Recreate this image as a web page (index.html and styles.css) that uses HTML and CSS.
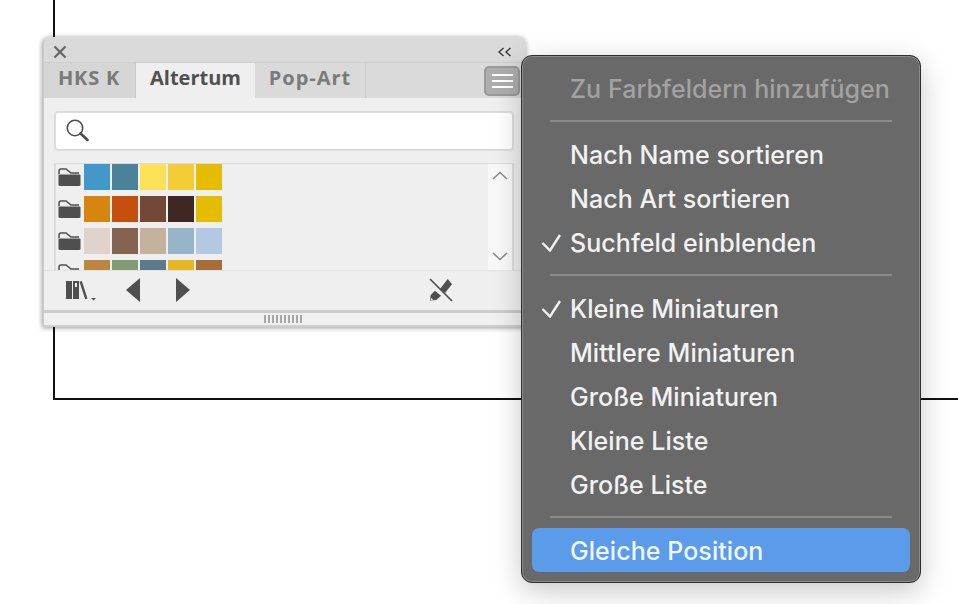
FILE: index.html
```html
<!DOCTYPE html>
<html lang="de">
<head>
<meta charset="utf-8">
<title>Farbfelder</title>
<link rel="stylesheet" href="styles.css">
</head>
<body>
<div class="canvas">
  <div class="artboard"></div>

  <section class="panel">
    <header class="titlebar">
      <svg class="close" width="14" height="14" viewBox="0 0 14 14"><path d="M1.500 1.500l11 11M12.500 1.500l-11 11" stroke="#666" stroke-width="2.200" fill="none"/></svg>
      <svg class="collapse" width="16" height="10" viewBox="0 0 16 10"><path d="M6.500 1L2 5l4.500 4M13.500 1L9 5l4.500 4" stroke="#333" stroke-width="1.300" fill="none"/></svg>
    </header>
    <nav class="tabs">
      <div class="tab tab-hks">HKS K</div>
      <div class="tab tab-active">Altertum</div>
      <div class="tab tab-pop">Pop-Art</div>
      <div class="tab-spacer"><button class="menu-btn" aria-label="Menü"><span></span><span></span><span></span></button></div>
    </nav>
    <div class="body">
      <div class="search">
        <svg width="24" height="24" viewBox="0 0 24 24"><circle cx="9" cy="9" r="7.700" stroke="#4d4d4d" stroke-width="1.600" fill="none"/><path d="M14.500 14.500l7 6.500" stroke="#4d4d4d" stroke-width="2.600" stroke-linecap="round"/></svg>
      </div>
      <div class="list">
        <div class="rows">
          <div class="row">
            <svg class="folder" width="24" height="18" viewBox="0 0 24 18"><path d="M1 6V3Q1 1 3 1h5l5 4h8" stroke="#4f4f4f" stroke-width="1.500" fill="none"/><path d="M.500 6.500h21q1 0 1 1V16.500q0 1.500-1.500 1.500H2q-1.500 0-1.500-1.500z" fill="#4f4f4f"/></svg>
            <i class="c1a"></i><i class="c1b"></i><i class="c1c"></i><i class="c1d"></i><i class="c1e"></i>
          </div>
          <div class="row">
            <svg class="folder" width="24" height="18" viewBox="0 0 24 18"><path d="M1 6V3Q1 1 3 1h5l5 4h8" stroke="#4f4f4f" stroke-width="1.500" fill="none"/><path d="M.500 6.500h21q1 0 1 1V16.500q0 1.500-1.500 1.500H2q-1.500 0-1.500-1.500z" fill="#4f4f4f"/></svg>
            <i class="c2a"></i><i class="c2b"></i><i class="c2c"></i><i class="c2d"></i><i class="c1e"></i>
          </div>
          <div class="row">
            <svg class="folder" width="24" height="18" viewBox="0 0 24 18"><path d="M1 6V3Q1 1 3 1h5l5 4h8" stroke="#4f4f4f" stroke-width="1.500" fill="none"/><path d="M.500 6.500h21q1 0 1 1V16.500q0 1.500-1.500 1.500H2q-1.500 0-1.500-1.500z" fill="#4f4f4f"/></svg>
            <i class="c3a"></i><i class="c3b"></i><i class="c3c"></i><i class="c3d"></i><i class="c3e"></i>
          </div>
          <div class="row">
            <svg class="folder" width="24" height="18" viewBox="0 0 24 18"><path d="M1 6V3Q1 1 3 1h5l5 4h8" stroke="#4f4f4f" stroke-width="1.500" fill="none"/><path d="M.500 6.500h21q1 0 1 1V16.500q0 1.500-1.500 1.500H2q-1.500 0-1.500-1.500z" fill="#4f4f4f"/></svg>
            <i class="c4a"></i><i class="c4b"></i><i class="c4c"></i><i class="c4d"></i><i class="c4e"></i>
          </div>
        </div>
        <div class="scrollbar">
          <svg width="16" height="9" viewBox="0 0 16 9"><path d="M1 8l7-6.500L15 8" stroke="#8a8a8a" stroke-width="1.500" fill="none"/></svg>
          <svg width="16" height="9" viewBox="0 0 16 9"><path d="M1 1l7 6.500L15 1" stroke="#8a8a8a" stroke-width="1.500" fill="none"/></svg>
        </div>
      </div>
      <div class="toolbar">
        <svg class="lib" width="30" height="20" viewBox="0 0 30 20"><path d="M0 0h6v18H0zM7 0h6v18H7z" fill="#4f4f4f"/><path d="M9 2h2v4H9z" fill="#efefef"/><path d="M13.500 .8l2.300-.8L21.500 17.500l-2.300.8z" fill="#4f4f4f"/><path d="M25 17h5l-2.500 2.500z" fill="#4f4f4f"/></svg>
        <svg class="prev" width="14" height="24" viewBox="0 0 14 24"><path d="M14 0v24L0 12z" fill="#4f4f4f"/></svg>
        <svg class="next" width="14" height="24" viewBox="0 0 14 24"><path d="M0 0v24l14-12z" fill="#4f4f4f"/></svg>
        <svg class="nopen" width="24" height="24" viewBox="0 0 24 24"><path d="M11 11L18.700 1 23 6.300 16 15z" fill="#4f4f4f"/><path d="M6 12.700l6 5L7.700 21.700 1 23l.7-6z" fill="#4f4f4f"/><path d="M1.500 23l.5-3 2.500 2z" fill="#efefef"/><path d="M1 1l22 22" stroke="#4f4f4f" stroke-width="1.700"/></svg>
      </div>
      <div class="grip"><span class="grip-lines"></span></div>
    </div>
  </section>

  <div class="menu">
    <div class="item disabled">Zu Farbfeldern hinzufügen</div>
    <div class="sep"></div>
    <div class="item">Nach Name sortieren</div>
    <div class="item">Nach Art sortieren</div>
    <div class="item"><svg class="check" width="20" height="18" viewBox="0 0 20 18"><path d="M1.500 9l7.500 7.500L19 1" stroke="#f2f2f2" stroke-width="2.400" fill="none"/></svg>Suchfeld einblenden</div>
    <div class="sep"></div>
    <div class="item"><svg class="check" width="20" height="18" viewBox="0 0 20 18"><path d="M1.500 9l7.500 7.500L19 1" stroke="#f2f2f2" stroke-width="2.400" fill="none"/></svg>Kleine Miniaturen</div>
    <div class="item">Mittlere Miniaturen</div>
    <div class="item">Große Miniaturen</div>
    <div class="item">Kleine Liste</div>
    <div class="item">Große Liste</div>
    <div class="sep sep-last"></div>
    <div class="item selected">Gleiche Position</div>
  </div>
</div>
</body>
</html>
```

FILE: styles.css
```css
* { box-sizing: border-box; }
html, body { margin: 0; padding: 0; background: #fff; overflow: hidden; }
.canvas { position: relative; width: 958px; height: 604px; overflow: hidden; background: #fff; }

.artboard {
  position: absolute; left: 53px; top: -2px; width: 920px; height: 402px;
  border-left: 2px solid #111; border-bottom: 2px solid #111;
}

.panel {
  position: absolute; left: 43px; top: 37px; width: 483px; height: 290px;
  display: flex; flex-direction: column;
  background: #efefef; border-radius: 7px 7px 0 0;
  border-left: 1px solid #c9c9c9;
  box-shadow: -1px 1px 5px rgba(0,0,0,.3), 0 0 5px rgba(0,0,0,.15);
  font-family: "Open Sans", "Noto Sans", sans-serif;
}
.titlebar {
  height: 26px; flex: none; display: flex; align-items: center; justify-content: space-between;
  padding: 4px 13px 0 9px;
  background: #dadada; border-radius: 7px 7px 0 0; border-bottom: 1px solid #cdcdcd;
}
.tabs { display: flex; height: 35px; flex: none; background: #dadada; }
.tab {
  display: flex; align-items: center; justify-content: center; padding-bottom: 6px;
  font-size: 20px; font-weight: 700; color: #7a7a7a;
  border-right: 1px solid #cbcbcb; background: #d6d6d6;
}
.tab-hks { width: 92px; letter-spacing: .8px; padding-right: 1px; }
.tab-active { width: 119px; background: #efefef; color: #505050; border-right: 0; }
.tab-pop { width: 111px; background: #dadada; letter-spacing: 1px; }
.tab-spacer { flex: 1; display: flex; align-items: center; justify-content: flex-end; padding-right: 6px; }
.menu-btn {
  width: 36px; height: 30px; padding: 0; display: flex; flex-direction: column; align-items: center; justify-content: center; gap: 4px;
  background: #adadad; border: 2px solid #999; border-radius: 5px;
}
.menu-btn span { display: block; width: 21px; height: 2px; background: #fff; }

.body { flex: 1; display: flex; flex-direction: column; padding-top: 13px; min-height: 0; }
.search {
  height: 40px; margin: 0 12px 0 10px; flex: none; display: flex; align-items: center; padding-left: 10px;
  background: #fff; border: 2px solid #dcdcdc; border-radius: 4px;
}
.list {
  height: 107px; margin: 12px 12px 0 10px; flex: none; display: flex; overflow: hidden;
  background: #efefef; border: 2px solid #dcdcdc; border-top-width: 1px; border-bottom: 0;
}
.rows { flex: 1; display: flex; flex-direction: column; gap: 6px; padding-left: 2px; overflow: hidden; }
.row { display: flex; gap: 2px; height: 26px; flex: none; align-items: center; }
.row i { display: block; width: 26px; height: 26px; flex: none; }
.folder { flex: none; }
.scrollbar {
  width: 24px; flex: none; display: flex; flex-direction: column; justify-content: space-between; align-items: center;
  padding: 7px 1px 9px 0; background: #f8f8f8;
}
.c1a { background: #4299c9; } .c1b { background: #4a8399; } .c1c { background: #fee156; } .c1d { background: #f2cd35; } .c1e { background: #e4bd00; }
.c2a { background: #d6860f; } .c2b { background: #c5500d; } .c2c { background: #744836; } .c2d { background: #3f2824; }
.c3a { background: #e0d3cc; } .c3b { background: #846352; } .c3c { background: #c5b29c; } .c3d { background: #96b5ca; } .c3e { background: #b4c8e2; }
.c4a { background: #be8440; } .c4b { background: #829b72; } .c4c { background: #5b7a8a; } .c4d { background: #e5b722; } .c4e { background: #a76d38; }

.toolbar { height: 40px; flex: none; display: flex; align-items: center; padding: 0 0 2px 22px; border-top: 1px solid #e2e2e2; }
.lib { margin-top: 2px; }
.prev { margin-left: 30px; }
.next { margin-left: 36px; }
.nopen { margin-left: 239px; }
.grip {
  flex: 1; display: flex; align-items: center; justify-content: center; padding-right: 4px;
  border-top: 3px solid #cccccc; border-bottom: 2px solid #cfcfcf; background: #f0f0f0;
}
.grip-lines {
  width: 39px; height: 8px;
  background: repeating-linear-gradient(90deg, #a6a6a6 0 2px, transparent 2px 4px);
}

.menu {
  position: absolute; left: 521px; top: 55px; width: 400px; height: 528px;
  padding: 12px 10px 0;
  background: #696969; border: 1px solid #2e2e2e; border-radius: 11px;
  box-shadow: inset 0 0 0 1px #8a8a8a, 0 8px 28px rgba(0,0,0,.22);
  font-family: Inter, "Noto Sans", sans-serif; font-size: 25px; font-weight: 500; letter-spacing: .06px; color: #f2f2f2;
}
.item {
  display: flex; align-items: center; height: 44px; padding-left: 38px; padding-bottom: 3px; border-radius: 7px; white-space: nowrap;
}
.item.disabled { color: #a2a2a2; }
.item.selected { background: #5a9bea; color: #f1f7ff; padding-bottom: 0; padding-top: 1px; }
.check { flex: none; margin: 0 9px 0 -29px; }
.sep { height: 22px; display: flex; align-items: center; margin: 0 18px; padding-bottom: 4px; }
.sep-last { height: 20px; padding-bottom: 2px; }
.sep::before { content: ""; display: block; width: 100%; height: 2px; background: #8a8a8a; }
```
